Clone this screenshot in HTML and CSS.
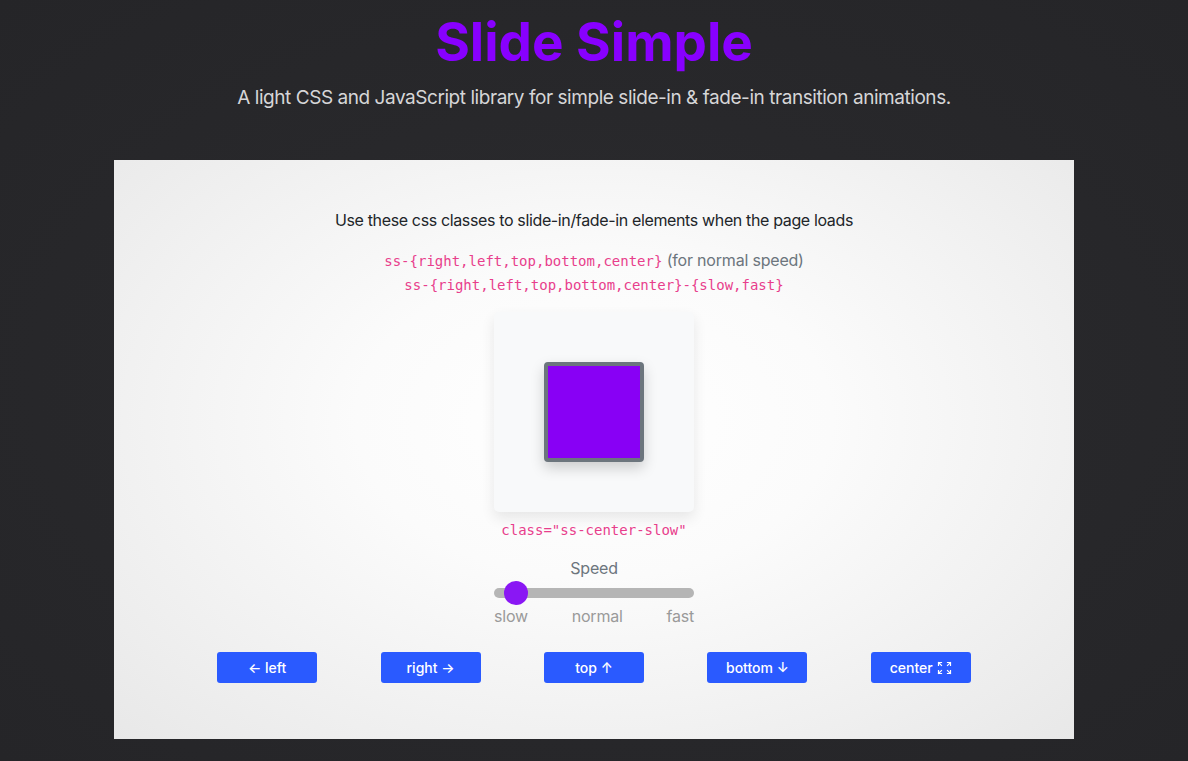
FILE: index.html
```html
<!DOCTYPE html>
<html lang="en">
<head>
<meta charset="utf-8">
<title>Slide Simple</title>
<link rel="stylesheet" href="styles.css">
</head>
<body>
<header class="header">
  <h1 class="title">Slide Simple</h1>
  <p class="subtitle">A light CSS and JavaScript library for simple slide-in &amp; fade-in transition animations.</p>
</header>
<main class="panel">
  <p class="intro">Use these css classes to slide-in/fade-in elements when the page loads</p>
  <p class="codes"><code>ss-{right,left,top,bottom,center}</code> <span class="note">(for normal speed)</span><br><code>ss-{right,left,top,bottom,center}-{slow,fast}</code></p>
  <div class="stage">
    <div class="square"></div>
  </div>
  <code class="classname">class="ss-center-slow"</code>
  <div class="speed">
    <div class="speed-label">Speed</div>
    <div class="track"><span class="thumb"></span></div>
    <div class="ticks"><span>slow</span><span>normal</span><span>fast</span></div>
  </div>
  <div class="buttons">
    <button class="btn">← left</button>
    <button class="btn">right →</button>
    <button class="btn">top ↑</button>
    <button class="btn">bottom ↓</button>
    <button class="btn">center <svg class="expand" width="15" height="14" viewBox="0 0 15 14" fill="none" stroke="#fff" stroke-width="1.2" stroke-linecap="square"><path d="M1.5 1.5h3M1.5 1.5v3M1.5 1.5l3 3"/><path d="M13.5 1.5h-3M13.5 1.5v3M13.5 1.5l-3 3"/><path d="M1.5 12.5h3M1.5 12.5v-3M1.5 12.5l3-3"/><path d="M13.5 12.5h-3M13.5 12.5v-3M13.5 12.5l-3-3"/></svg></button>
  </div>
</main>
</body>
</html>
```
FILE: styles.css
```css
* { box-sizing: border-box; }
html, body { height: 100%; }
body {
  margin: 0;
  font-family: Inter, "Noto Sans", sans-serif;
  background: radial-gradient(ellipse at 50% 50%, #2c2c2f 0%, #28282b 50%, #252528 100%);
  color: #212529;
}
.header {
  text-align: center;
  padding-top: 12px;
  height: 160px;
}
.title {
  margin: 0;
  font-size: 53px;
  line-height: 60px;
  font-weight: 700;
  color: #8800ff;
  letter-spacing: 0;
}
.subtitle {
  margin: 14px 0 0;
  font-size: 19px;
  line-height: 24px;
  font-weight: 400;
  color: #d6d6d8;
  letter-spacing: -0.45px;
}
.panel {
  width: 960px;
  height: 579px;
  margin: 0 auto;
  background: radial-gradient(ellipse at 50% 45%, #ffffff 0%, #fbfbfb 35%, #e8e8e8 100%);
  display: flex;
  flex-direction: column;
  align-items: center;
  padding-top: 48px;
}
.intro {
  margin: 0;
  font-size: 16px;
  line-height: 24px;
  color: #212529;
  letter-spacing: -0.36px;
}
.codes {
  margin: 17px 0 0;
  text-align: center;
  font-size: 16px;
  line-height: 23px;
  letter-spacing: -0.2px;
}
code {
  font-family: "DejaVu Sans Mono", "Liberation Mono", monospace;
  font-size: 14px;
  color: #e83e8c;
  letter-spacing: 0;
}
.note { color: #6c757d; }
.stage {
  margin-top: 15px;
  width: 200px;
  height: 200px;
  background: #f8f9fa;
  border-radius: 5px;
  box-shadow: 0 6px 14px rgba(0,0,0,0.09);
  display: flex;
  align-items: center;
  justify-content: center;
}
.square {
  width: 100px;
  height: 100px;
  background: #8800f5;
  border: 4px solid #6c757d;
  border-radius: 4px;
  box-shadow: 0 6px 14px rgba(0,0,0,0.18);
}
.classname {
  margin-top: 7px;
  line-height: 22px;
}
.speed {
  margin-top: 15px;
  width: 200px;
  display: flex;
  flex-direction: column;
  align-items: center;
}
.speed-label {
  font-size: 16px;
  line-height: 24px;
  color: #6c757d;
  letter-spacing: -0.2px;
}
.track {
  position: relative;
  margin-top: 8px;
  width: 200px;
  height: 10px;
  border-radius: 5px;
  background: #b5b5b5;
}
.thumb {
  position: absolute;
  left: 10px;
  top: -7px;
  width: 24px;
  height: 24px;
  border-radius: 50%;
  background: #8a17f4;
}
.ticks {
  width: 200px;
  display: flex;
  justify-content: space-between;
  margin-top: 7px;
  font-size: 16px;
  line-height: 22px;
  color: #9a9a9a;
  letter-spacing: -0.2px;
}
.buttons {
  width: 817px;
  margin-top: 25px;
  display: flex;
  justify-content: space-around;
}
.btn {
  width: 100px;
  height: 31px;
  border: 0;
  border-radius: 3px;
  background: #2a5aff;
  color: #fff;
  font-family: Inter, "Noto Sans", sans-serif;
  font-size: 14px;
  font-weight: 500;
  display: flex;
  align-items: center;
  justify-content: center;
  gap: 4px;
  padding: 0;
}
.expand { display: block; }
```
